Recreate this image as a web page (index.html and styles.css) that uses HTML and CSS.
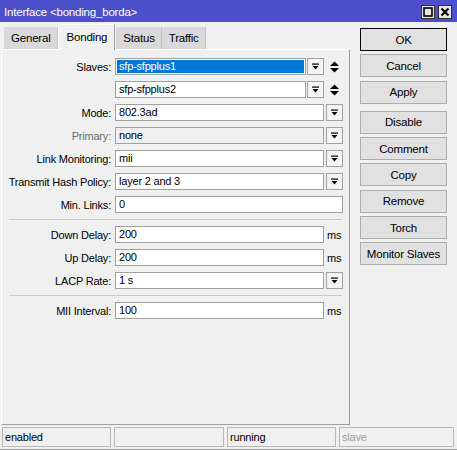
FILE: index.html
```html
<!DOCTYPE html>
<html lang="en">
<head>
    <meta charset="UTF-8">
    <title>Interface &lt;bonding_borda&gt;</title>
    <link rel="stylesheet" href="styles.css">
</head>
<body>

<div class="window">
    <div class="titlebar">
        <span class="title">Interface &lt;bonding_borda&gt;</span>
        <div class="title-btns">
            <span class="tbtn">
                <svg width="10" height="10" viewBox="0 0 10 10"><rect x="1" y="1" width="8" height="8" fill="none" stroke="#000" stroke-width="1.6"/></svg>
            </span>
            <span class="tbtn">
                <svg width="10" height="10" viewBox="0 0 10 10"><path d="M1.5 1.5 L8.5 8.5 M8.5 1.5 L1.5 8.5" stroke="#000" stroke-width="2"/></svg>
            </span>
        </div>
    </div>

    <div class="body">
        <div class="main">
            <div class="tabs">
                <div class="tab">General</div>
                <div class="tab active">Bonding</div>
                <div class="tab">Status</div>
                <div class="tab">Traffic</div>
            </div>

            <div class="panel">
                <div class="form">
                    <div class="row">
                        <span class="label">Slaves:</span>
                        <span class="field selected"><span class="sel">sfp-sfpplus1</span></span>
                        <span class="dd slave-dd"><svg width="7" height="7" viewBox="0 0 7 7"><rect x="0" y="0.5" width="7" height="1.2"/><polygon points="0.5,3 6.5,3 3.5,6.5"/></svg></span>
                        <span class="updown"><svg width="9" height="12" viewBox="0 0 9 12"><polygon points="0,5 4.5,0.5 9,5"/><polygon points="0,7 9,7 4.5,11.5"/></svg></span>
                    </div>
                    <div class="row">
                        <span class="label"></span>
                        <span class="field">sfp-sfpplus2</span>
                        <span class="dd slave-dd"><svg width="7" height="7" viewBox="0 0 7 7"><rect x="0" y="0.5" width="7" height="1.2"/><polygon points="0.5,3 6.5,3 3.5,6.5"/></svg></span>
                        <span class="updown"><svg width="9" height="12" viewBox="0 0 9 12"><polygon points="0,5 4.5,0.5 9,5"/><polygon points="0,7 9,7 4.5,11.5"/></svg></span>
                    </div>
                    <div class="row">
                        <span class="label">Mode:</span>
                        <span class="field">802.3ad</span>
                        <span class="dd"><svg width="7" height="7" viewBox="0 0 7 7"><rect x="0" y="0.5" width="7" height="1.2"/><polygon points="0.5,3 6.5,3 3.5,6.5"/></svg></span>
                    </div>
                    <div class="row">
                        <span class="label disabled">Primary:</span>
                        <span class="field readonly">none</span>
                        <span class="dd"><svg width="7" height="7" viewBox="0 0 7 7"><rect x="0" y="0.5" width="7" height="1.2"/><polygon points="0.5,3 6.5,3 3.5,6.5"/></svg></span>
                    </div>
                    <div class="row">
                        <span class="label">Link Monitoring:</span>
                        <span class="field">mii</span>
                        <span class="dd"><svg width="7" height="7" viewBox="0 0 7 7"><rect x="0" y="0.5" width="7" height="1.2"/><polygon points="0.5,3 6.5,3 3.5,6.5"/></svg></span>
                    </div>
                    <div class="row">
                        <span class="label">Transmit Hash Policy:</span>
                        <span class="field">layer 2 and 3</span>
                        <span class="dd"><svg width="7" height="7" viewBox="0 0 7 7"><rect x="0" y="0.5" width="7" height="1.2"/><polygon points="0.5,3 6.5,3 3.5,6.5"/></svg></span>
                    </div>
                    <div class="row">
                        <span class="label">Min. Links:</span>
                        <span class="field">0</span>
                    </div>

                    <div class="sep"></div>

                    <div class="row">
                        <span class="label">Down Delay:</span>
                        <span class="field">200</span>
                        <span class="unit">ms</span>
                    </div>
                    <div class="row">
                        <span class="label">Up Delay:</span>
                        <span class="field">200</span>
                        <span class="unit">ms</span>
                    </div>
                    <div class="row">
                        <span class="label">LACP Rate:</span>
                        <span class="field">1 s</span>
                        <span class="dd"><svg width="7" height="7" viewBox="0 0 7 7"><rect x="0" y="0.5" width="7" height="1.2"/><polygon points="0.5,3 6.5,3 3.5,6.5"/></svg></span>
                    </div>

                    <div class="sep"></div>

                    <div class="row">
                        <span class="label">MII Interval:</span>
                        <span class="field">100</span>
                        <span class="unit">ms</span>
                    </div>
                </div>
            </div>
        </div>

        <div class="actions">
            <div class="btn default">OK</div>
            <div class="btn">Cancel</div>
            <div class="btn">Apply</div>
            <div class="btn group">Disable</div>
            <div class="btn">Comment</div>
            <div class="btn">Copy</div>
            <div class="btn">Remove</div>
            <div class="btn">Torch</div>
            <div class="btn">Monitor Slaves</div>
        </div>
    </div>

    <div class="statusbar">
        <div class="cell c1">enabled</div>
        <div class="cell c2"></div>
        <div class="cell c3">running</div>
        <div class="cell c4 dim">slave</div>
    </div>
</div>

</body>
</html>
```

FILE: styles.css
```css
body {
    margin: 0;
    background-color: #f0f0f0;
    font-family: "Liberation Sans", Arial, sans-serif;
    font-size: 11px;
    letter-spacing: -0.2px;
    color: #000;
}

.window {
    width: 457px;
    height: 450px;
    box-sizing: border-box;
    border-bottom: 1px solid #a0a0a0;
    display: flex;
    flex-direction: column;
}

/* title bar */
.titlebar {
    height: 22px;
    flex-shrink: 0;
    background-color: #4b4fc9;
    color: #fff;
    display: flex;
    align-items: center;
    justify-content: space-between;
    padding: 1px 5px 0 4px;
    box-sizing: border-box;
    font-size: 11.5px;
}

.title-btns {
    display: flex;
    gap: 3px;
}

.tbtn {
    width: 14px;
    height: 14px;
    box-sizing: border-box;
    background-color: #e6e6e6;
    border: 1px solid #303030;
    display: flex;
    align-items: center;
    justify-content: center;
}

.body {
    flex: 1;
    display: flex;
}

.main {
    width: 349px;
    margin-left: 1px;
    display: flex;
    flex-direction: column;
}

/* tabs */
.tabs {
    height: 27px;
    display: flex;
    align-items: flex-end;
    padding-left: 3px;
}

.tab {
    height: 22px;
    box-sizing: border-box;
    padding: 0 6px 1px 7px;
    background-color: #d9d9d9;
    border-right: 1px solid #c4c4c4;
    display: flex;
    align-items: center;
    font-size: 11.5px;
}

.tab.active {
    height: 26px;
    margin-bottom: -1px;
    padding: 0 7px 2px 8px;
    background-color: #f0f0f0;
    border-top: 1px solid #fff;
    border-left: 1px solid #fff;
    border-right: 1px solid #a0a0a0;
    position: relative;
    z-index: 1;
    margin-right: 1px;
}

.panel {
    flex: 1;
    border-top: 1px solid #fff;
    border-left: 1px solid #fff;
    border-right: 1px solid #a0a0a0;
    border-bottom: 1px solid #a0a0a0;
    padding: 8px 6px 0 0;
}

/* form rows */
.form {
    display: flex;
    flex-direction: column;
    gap: 6px;
}

.row {
    display: flex;
    align-items: center;
    height: 17px;
}

.label {
    width: 109px;
    margin-right: 4px;
    text-align: right;
    white-space: nowrap;
}

.label.disabled {
    color: #6d6d6d;
}

.field {
    flex: 1;
    height: 17px;
    box-sizing: border-box;
    border: 1px solid #a0a0a0;
    background-color: #fff;
    padding: 0 3px;
    line-height: 15px;
    white-space: nowrap;
}

.field.readonly {
    background-color: #f0f0f0;
}

.field.selected {
    padding: 1px;
}

.sel {
    display: block;
    height: 13px;
    line-height: 13px;
    padding-left: 2px;
    background-color: #0078d7;
    color: #fff;
}

.dd {
    width: 17px;
    height: 17px;
    box-sizing: border-box;
    margin-left: 2px;
    border: 1px solid #a0a0a0;
    background-color: #f4f4f4;
    display: flex;
    align-items: center;
    justify-content: center;
}

.slave-dd {
    margin-left: 1px;
}

.updown {
    width: 18px;
    display: flex;
    align-items: center;
    justify-content: center;
    padding-left: 1px;
}

.unit {
    width: 16px;
    padding-left: 3px;
}

.sep {
    height: 1px;
    background-color: #c8c8c8;
    margin: 0 1px 0 7px;
}

/* buttons on the right */
.actions {
    width: 87px;
    margin-left: 10px;
    padding-top: 6px;
    display: flex;
    flex-direction: column;
    gap: 3.3px;
}

.btn {
    height: 23px;
    box-sizing: border-box;
    border: 1px solid #adadad;
    background-color: #e1e1e1;
    display: flex;
    align-items: center;
    justify-content: center;
    font-size: 11.5px;
}

.btn.default {
    border: 1px solid #000;
}

.btn.group {
    margin-top: 4px;
}

/* status bar */
.statusbar {
    height: 20px;
    flex-shrink: 0;
    margin: 2px 0 2px;
    padding-left: 2px;
    display: flex;
    gap: 3px;
}

.cell {
    box-sizing: border-box;
    border: 1px solid #b9b9b9;
    padding-left: 2px;
    line-height: 18px;
}

.c1 { width: 109px; }
.c2 { width: 110px; }
.c3 { width: 109px; }
.c4 { width: 115px; }

.dim {
    color: #a0a0a0;
}
```
